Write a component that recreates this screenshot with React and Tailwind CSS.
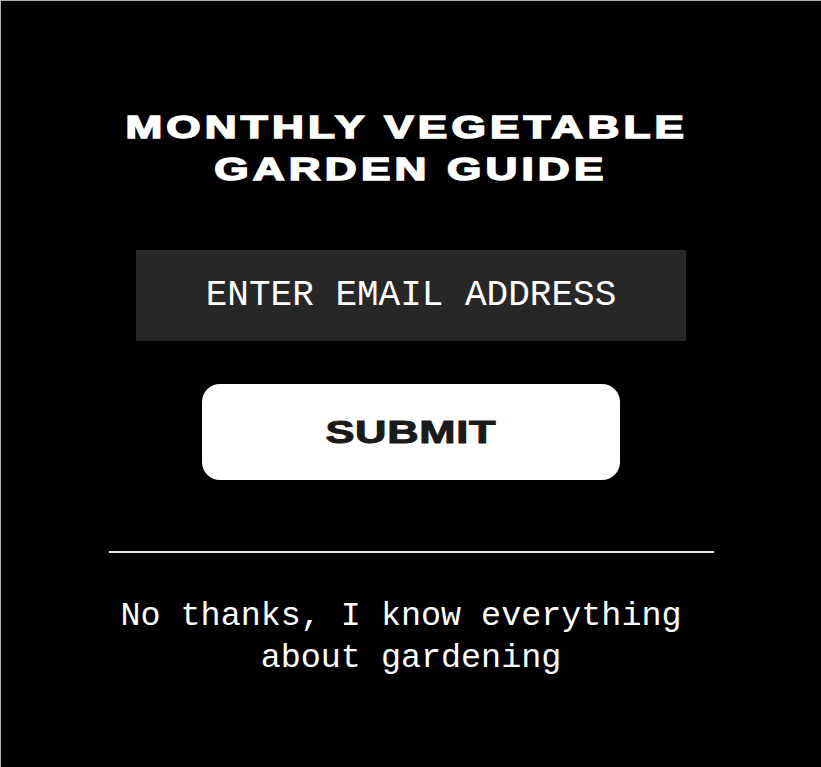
import React from "react";

const App = () => {
  return (
    <div className="w-[821px] h-[767px] bg-black border-t border-l border-[#b0b0b0] flex flex-col items-center">
      {/* Heading */}
      <h1 className="mt-[105px] text-white text-center text-[32px] leading-[42px] font-black tracking-[3px] uppercase font-['Liberation_Sans',Arial,sans-serif] [-webkit-text-stroke:1.5px_white] scale-x-[1.38]">
        Monthly Vegetable<span className="inline-block w-[6px]" />
        <br />
        Garden Guide
      </h1>

      {/* Email field */}
      <input
        type="email"
        placeholder="ENTER EMAIL ADDRESS"
        className="mt-[60px] w-[550px] h-[91px] bg-[#272727] text-white placeholder-white text-center text-[36px] outline-none font-['Liberation_Mono',monospace]"
      />

      {/* Submit */}
      <button className="mt-[43px] w-[418px] h-[96px] bg-white rounded-[18px] text-[#1a1a1a] text-[32px] font-black font-['Liberation_Sans',Arial,sans-serif] [-webkit-text-stroke:1px_#1a1a1a]">
        <span className="inline-block tracking-[0.5px] scale-x-[1.36]">SUBMIT</span>
      </button>

      <div className="mt-[71px] w-[605px] h-[2px] bg-[#e6e6e6]" />

      <p className="mt-[42px] text-white text-center text-[33.4px] leading-[42px] font-['Liberation_Mono',monospace]">
        No thanks, I know everything{"\u00a0"}
        <br />
        about gardening
      </p>
    </div>
  );
};

export default App;
